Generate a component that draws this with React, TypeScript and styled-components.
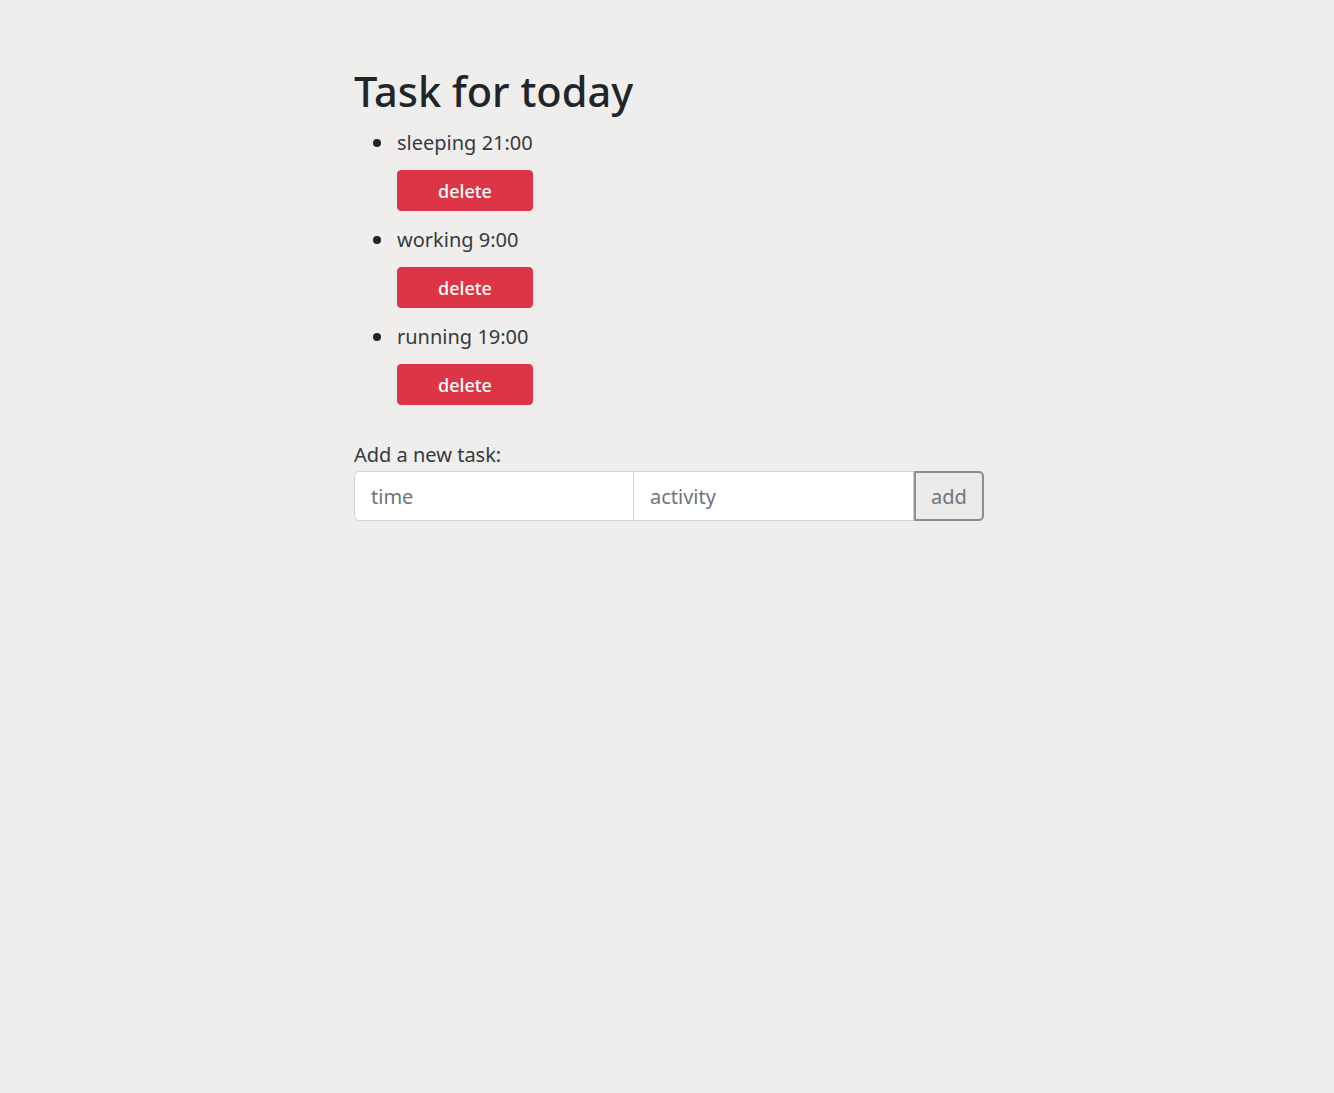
import React from "react";
import styled, { createGlobalStyle } from "styled-components";

const Global = createGlobalStyle`
  html, body { margin: 0; padding: 0; background: #efeeec; }
  body { font-family: "Noto Sans", "Open Sans", sans-serif; color: #212529; }
  * { box-sizing: border-box; }
`;

const Page = styled.div`
  min-height: 1093px;
  padding: 67px 0 0 354px;
`;

const Title = styled.h1`
  margin: 0 0 12px;
  font-size: 41.5px;
  line-height: 49px;
  font-weight: 500;
  color: #212529;
`;

const List = styled.ul`
  margin: 0 0 35px;
  padding-left: 43px;
  list-style: none;
  font-size: 20px;
  line-height: 30px;
`;

const Item = styled.li`
  margin-bottom: 14px;
`;

const ItemText = styled.div`
  position: relative;
  color: #343a40;
  &::before {
    content: "";
    position: absolute;
    left: -24px;
    top: 11px;
    width: 8px;
    height: 8px;
    border-radius: 50%;
    background: #212529;
  }
`;

const DeleteButton = styled.button`
  display: block;
  margin-top: 12px;
  width: 136px;
  height: 41px;
  background: #dc3545;
  border: 1px solid #dc3545;
  border-radius: 4px;
  color: #fff;
  font-family: inherit;
  font-size: 18px;
  font-weight: 500;
  cursor: pointer;
`;

const Label = styled.div`
  font-size: 20px;
  line-height: 30px;
  color: #343a40;
  margin-bottom: 1px;
`;

const Group = styled.div`
  display: flex;
  width: 630px;
  height: 50px;
`;

const Input = styled.input<{ $first?: boolean }>`
  width: 280px;
  height: 50px;
  border: 1px solid #ced4da;
  border-left-width: ${(p) => (p.$first ? "1px" : "0")};
  border-radius: ${(p) => (p.$first ? "5px 0 0 5px" : "0")};
  background: #fff;
  padding: 0 16px;
  font-family: inherit;
  font-size: 20px;
  color: #495057;
  outline: none;
  &::placeholder { color: #6c757d; }
`;

const AddButton = styled.button`
  width: 70px;
  height: 50px;
  border: 2px solid #8a8f94;
  border-radius: 0 5px 5px 0;
  background: #ecebea;
  color: #6c757d;
  font-family: inherit;
  font-size: 20px;
  cursor: pointer;
`;

const tasks = [
  { activity: "sleeping", time: "21:00" },
  { activity: "working", time: "9:00" },
  { activity: "running", time: "19:00" },
];

export default function App() {
  return (
    <>
      <Global />
      <Page>
        <Title>Task for today</Title>
        <List>
          {tasks.map((t) => (
            <Item key={t.activity}>
              <ItemText>
                {t.activity} {t.time}
              </ItemText>
              <DeleteButton>delete</DeleteButton>
            </Item>
          ))}
        </List>
        <Label>Add a new task:</Label>
        <Group>
          <Input $first placeholder="time" />
          <Input placeholder="activity" />
          <AddButton>add</AddButton>
        </Group>
      </Page>
    </>
  );
}
